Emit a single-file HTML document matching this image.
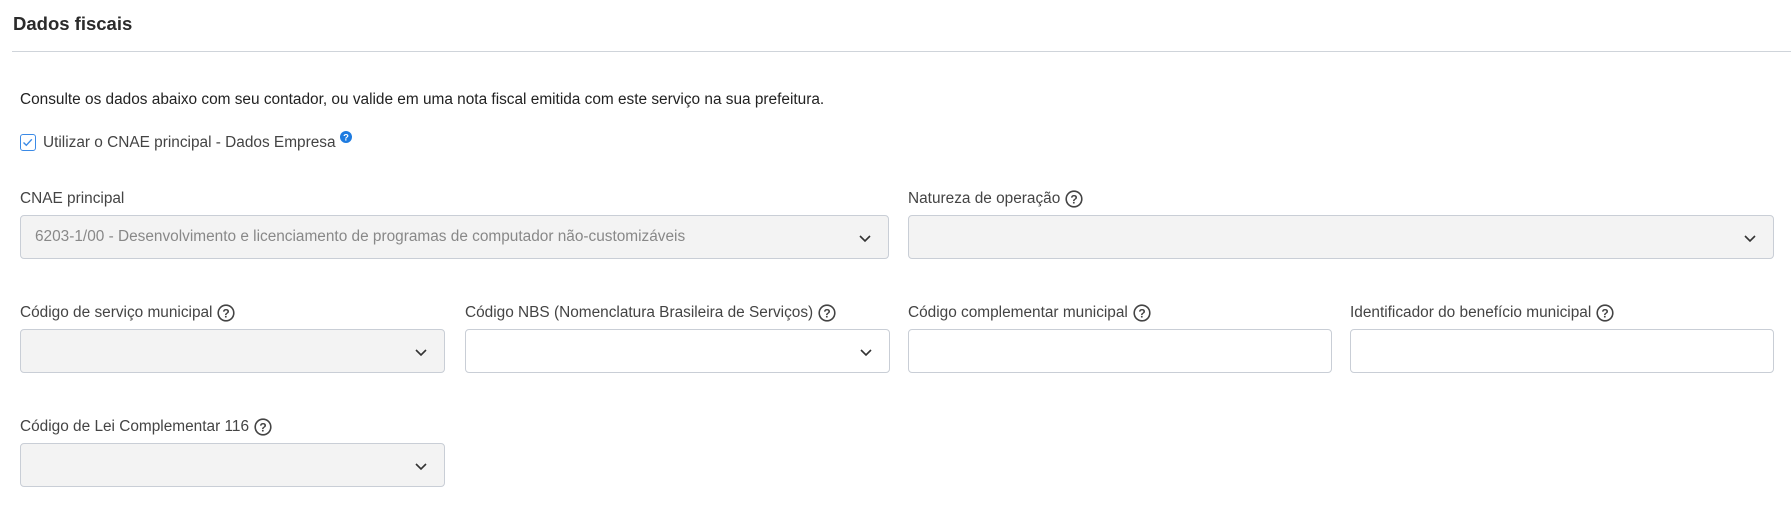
<!DOCTYPE html>
<html><head><meta charset="utf-8"><style>
*{box-sizing:border-box;margin:0;padding:0}
body{width:1791px;height:514px;background:#fff;font-family:"Liberation Sans",sans-serif;color:#333;position:relative;overflow:hidden}
.abs{position:absolute}
h1{position:absolute;left:13px;top:13px;font-size:18.5px;font-weight:bold;color:#2b2b2b}
.line{position:absolute;left:12px;right:0;top:51px;height:1px;background:#cfd4da}
.t{position:absolute;font-size:15.4px;color:#222;white-space:nowrap}
.lbl{position:absolute;font-size:15.4px;color:#444;white-space:nowrap;display:flex;align-items:center;gap:5px}
.box{position:absolute;height:44px;border:1px solid #c9ced6;border-radius:4px;background:#fff}
.g{background:#f3f3f3}
.chev{position:absolute;right:16px;top:15px}
.q{width:18px;height:18px}
</style></head><body>
<h1>Dados fiscais</h1>
<div class="line"></div>
<div class="t" style="left:20px;top:91px">Consulte os dados abaixo com seu contador, ou valide em uma nota fiscal emitida com este serviço na sua prefeitura.</div>
<div class="abs" style="left:20px;top:134px;width:16px;height:17px;border:1.5px solid #3b8ae6;border-radius:3px">
<svg width="13" height="13" viewBox="0 0 13 13" style="position:absolute;left:0;top:1px"><path d="M2.5 6.5l2.8 2.8 5.5-6" fill="none" stroke="#3b8ae6" stroke-width="1.4"/></svg></div>
<div class="t" style="left:43px;top:131px;color:#444">Utilizar o CNAE principal - Dados Empresa <svg style="vertical-align:4px" width="12" height="12" viewBox="0 0 12 12"><circle cx="6" cy="6" r="6" fill="#1e7be0"/><text x="6" y="9.5" font-size="9.5" font-weight="bold" fill="#fff" text-anchor="middle" font-family="Liberation Sans">?</text></svg></div>

<div class="lbl" style="left:20px;top:190px">CNAE principal</div>
<div class="box g" style="left:20px;top:215px;width:869px"><div class="t" style="left:14px;top:12px;color:#888">6203-1/00 - Desenvolvimento e licenciamento de programas de computador não-customizáveis</div><svg class="chev" width="14" height="14" viewBox="0 0 14 14"><path d="M2 5l5 5 5-5" fill="none" stroke="#333" stroke-width="1.6"/></svg></div>
<div class="lbl" style="left:908px;top:190px">Natureza de operação <svg class="q" viewBox="0 0 18 18"><circle cx="9" cy="9" r="7.8" fill="none" stroke="#444" stroke-width="1.6"/><text x="9" y="13.3" font-size="12" font-weight="bold" fill="#444" text-anchor="middle" font-family="Liberation Sans">?</text></svg></div>
<div class="box g" style="left:908px;top:215px;width:866px"><svg class="chev" width="14" height="14" viewBox="0 0 14 14"><path d="M2 5l5 5 5-5" fill="none" stroke="#333" stroke-width="1.6"/></svg></div>

<div class="lbl" style="left:20px;top:304px">Código de serviço municipal <svg class="q" viewBox="0 0 18 18"><circle cx="9" cy="9" r="7.8" fill="none" stroke="#444" stroke-width="1.6"/><text x="9" y="13.3" font-size="12" font-weight="bold" fill="#444" text-anchor="middle" font-family="Liberation Sans">?</text></svg></div>
<div class="box g" style="left:20px;top:329px;width:425px"><svg class="chev" width="14" height="14" viewBox="0 0 14 14"><path d="M2 5l5 5 5-5" fill="none" stroke="#333" stroke-width="1.6"/></svg></div>
<div class="lbl" style="left:465px;top:304px">Código NBS (Nomenclatura Brasileira de Serviços) <svg class="q" viewBox="0 0 18 18"><circle cx="9" cy="9" r="7.8" fill="none" stroke="#444" stroke-width="1.6"/><text x="9" y="13.3" font-size="12" font-weight="bold" fill="#444" text-anchor="middle" font-family="Liberation Sans">?</text></svg></div>
<div class="box" style="left:465px;top:329px;width:425px"><svg class="chev" width="14" height="14" viewBox="0 0 14 14"><path d="M2 5l5 5 5-5" fill="none" stroke="#333" stroke-width="1.6"/></svg></div>
<div class="lbl" style="left:908px;top:304px">Código complementar municipal <svg class="q" viewBox="0 0 18 18"><circle cx="9" cy="9" r="7.8" fill="none" stroke="#444" stroke-width="1.6"/><text x="9" y="13.3" font-size="12" font-weight="bold" fill="#444" text-anchor="middle" font-family="Liberation Sans">?</text></svg></div>
<div class="box" style="left:908px;top:329px;width:424px"></div>
<div class="lbl" style="left:1350px;top:304px">Identificador do benefício municipal <svg class="q" viewBox="0 0 18 18"><circle cx="9" cy="9" r="7.8" fill="none" stroke="#444" stroke-width="1.6"/><text x="9" y="13.3" font-size="12" font-weight="bold" fill="#444" text-anchor="middle" font-family="Liberation Sans">?</text></svg></div>
<div class="box" style="left:1350px;top:329px;width:424px"></div>

<div class="lbl" style="left:20px;top:418px">Código de Lei Complementar 116 <svg class="q" viewBox="0 0 18 18"><circle cx="9" cy="9" r="7.8" fill="none" stroke="#444" stroke-width="1.6"/><text x="9" y="13.3" font-size="12" font-weight="bold" fill="#444" text-anchor="middle" font-family="Liberation Sans">?</text></svg></div>
<div class="box g" style="left:20px;top:443px;width:425px"><svg class="chev" width="14" height="14" viewBox="0 0 14 14"><path d="M2 5l5 5 5-5" fill="none" stroke="#333" stroke-width="1.6"/></svg></div>
</body></html>
